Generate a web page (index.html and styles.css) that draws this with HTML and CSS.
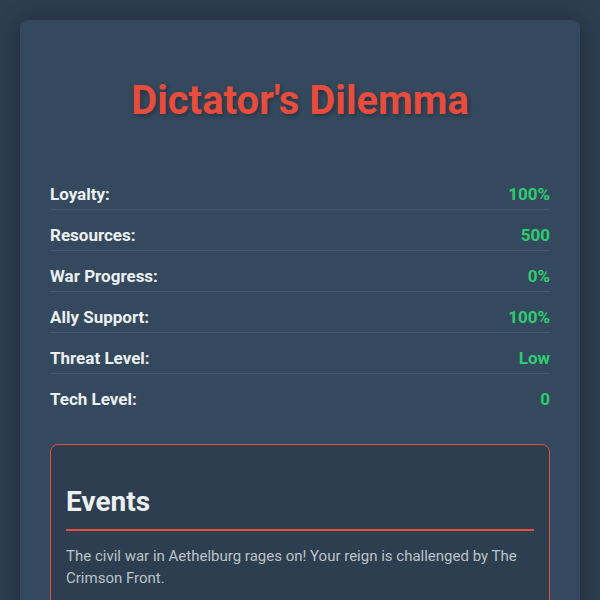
FILE: index.html
```html
<!DOCTYPE html>
<html lang="en">
<head>
    <meta charset="UTF-8">
    <meta name="viewport" content="width=device-width, initial-scale=1.0">
    <title>Dictator's Dilemma</title>
    <link rel="stylesheet" href="styles.css">
</head>
<body>
    <div class="container">
        <h1>Dictator's Dilemma</h1>

        <div class="stats">
            <div class="stat"><span class="stat-label">Loyalty:</span><span class="stat-value" id="loyalty">100%</span></div>
            <div class="stat"><span class="stat-label">Resources:</span><span class="stat-value" id="resources">500</span></div>
            <div class="stat"><span class="stat-label">War Progress:</span><span class="stat-value" id="war">0%</span></div>
            <div class="stat"><span class="stat-label">Ally Support:</span><span class="stat-value" id="allies">100%</span></div>
            <div class="stat"><span class="stat-label">Threat Level:</span><span class="stat-value" id="threat">Low</span></div>
            <div class="stat"><span class="stat-label">Tech Level:</span><span class="stat-value" id="tech">0</span></div>
        </div>

        <div class="events">
            <h2>Events</h2>
            <p id="eventText">The civil war in Aethelburg rages on! Your reign is challenged by The Crimson Front.</p>
        </div>
    </div>
</body>
</html>
```

FILE: styles.css
```css
body {
    font-family: Roboto, "Liberation Sans", Arial, sans-serif;
    margin: 0;
    padding: 20px;
    background-color: #2c3e50;
    color: #ecf0f1;
}
.container {
    max-width: 800px;
    margin: 0 auto;
    padding: 30px;
    background-color: #34495e;
    border-radius: 8px;
    box-shadow: 0 0 20px rgba(0,0,0,0.3);
}
h1 {
    text-align: center;
    color: #e74c3c;
    font-size: 40px;
    margin: 27px 0 55px;
    text-shadow: 2px 2px 4px rgba(0,0,0,0.3);
}
.stats {
    display: flex;
    flex-direction: column;
    gap: 10px;
    margin-bottom: 30px;
}
.stat {
    display: flex;
    justify-content: space-between;
    padding: 5px 0;
    line-height: 20px;
    border-bottom: 1px solid rgba(255,255,255,0.1);
    font-size: 17px;
}
.stat:last-child {
    border-bottom: none;
}
.stat-label {
    font-weight: bold;
}
.stat-value {
    font-weight: bold;
    color: #2ecc71;
}
.events {
    background-color: #2c3e50;
    border: 1px solid #e74c3c;
    border-radius: 8px;
    padding: 15px;
}
h2 {
    font-size: 28px;
    margin: 25px 0 14px;
    padding-bottom: 11px;
    border-bottom: 2px solid #e74c3c;
}
.events p {
    font-size: 15px;
    line-height: 22px;
    color: #bdc3c7;
    margin: 0 0 15px;
}
```
